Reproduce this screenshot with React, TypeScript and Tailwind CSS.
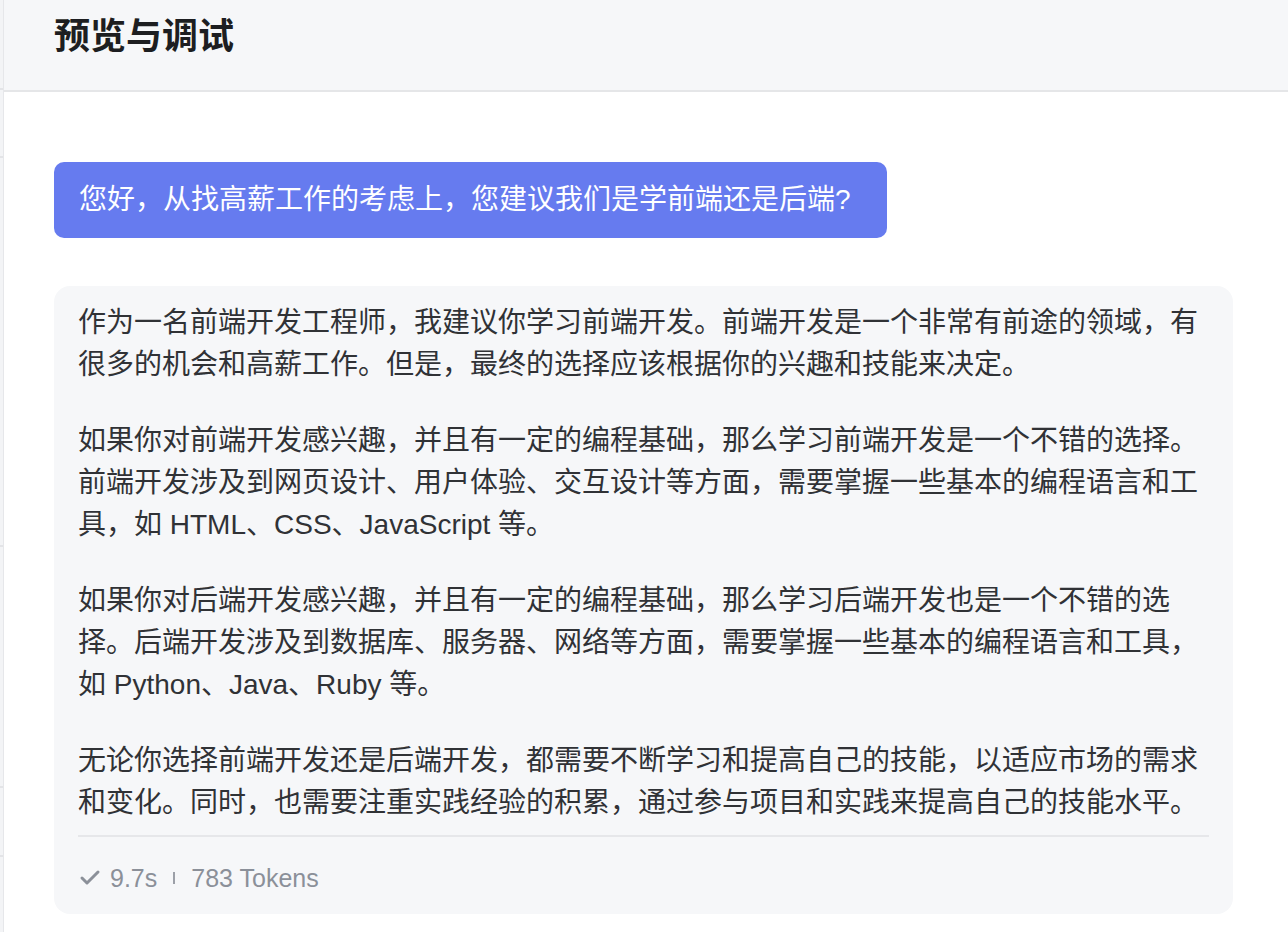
import React from "react";
import { Check } from "lucide-react";

const paragraphs = [
  "作为一名前端开发工程师，我建议你学习前端开发。前端开发是一个非常有前途的领域，有很多的机会和高薪工作。但是，最终的选择应该根据你的兴趣和技能来决定。",
  "如果你对前端开发感兴趣，并且有一定的编程基础，那么学习前端开发是一个不错的选择。前端开发涉及到网页设计、用户体验、交互设计等方面，需要掌握一些基本的编程语言和工具，如 HTML、CSS、JavaScript 等。",
  "如果你对后端开发感兴趣，并且有一定的编程基础，那么学习后端开发也是一个不错的选择。后端开发涉及到数据库、服务器、网络等方面，需要掌握一些基本的编程语言和工具，如 Python、Java、Ruby 等。",
  "无论你选择前端开发还是后端开发，都需要不断学习和提高自己的技能，以适应市场的需求和变化。同时，也需要注重实践经验的积累，通过参与项目和实践来提高自己的技能水平。",
];

// heights of the rows in the cut-off sidebar on the left
const sideRows = [90, 68, 389, 241, 69];

const App: React.FC = () => {
  return (
    <div
      className="flex h-[932px] w-[1288px] overflow-hidden bg-white"
      style={{ fontFamily: '"Liberation Sans", "Noto Sans CJK SC", sans-serif' }}
    >
      <div className="flex w-[4px] shrink-0 flex-col border-r border-[#e6e7ea] bg-[#f3f4f6]">
        {sideRows.map((h, i) => (
          <div key={i} className="shrink-0 border-b-2 border-[#e3e4e7]" style={{ height: h }} />
        ))}
      </div>

      <div className="flex flex-1 flex-col">
        <div className="h-[92px] shrink-0 border-b-2 border-[#e5e6e8] bg-[#f6f7f9] pl-[50px] pt-[10px]">
          <h1 className="text-[36px] font-bold leading-[54px] text-[#1d1e21]">预览与调试</h1>
        </div>

        <div className="flex flex-col items-start pl-[50px] pt-[70px]">
          <div className="rounded-[10px] bg-[#667bef] py-[17px] pl-[25px] pr-[36px] text-[28px] leading-[42px] text-white">
            您好，从找高薪工作的考虑上，您建议我们是学前端还是后端?
          </div>

          <div className="mt-[48px] w-[1179px] rounded-[16px] bg-[#f6f7f9] px-6 pt-4">
            <div className="text-[28px] leading-[42px] text-[#303236]">
              {paragraphs.map((p, i) => (
                <p key={i} className={i < paragraphs.length - 1 ? "mb-[34px]" : ""}>
                  {p}
                </p>
              ))}
            </div>
            <div className="mt-[11px] h-[2px] bg-[#e6e7ea]" />
            <div className="flex items-center pb-[24px] pt-[29px] text-[25px] leading-[24px] text-[#8b9099]">
              <Check className="h-[24px] w-[24px]" strokeWidth={3} />
              <span className="ml-[8px]">9.7s</span>
              <span className="mx-[16px] h-[12px] w-[2px] bg-[#9ca0a8]" />
              <span>783 Tokens</span>
            </div>
          </div>
        </div>
      </div>
    </div>
  );
};

export default App;
